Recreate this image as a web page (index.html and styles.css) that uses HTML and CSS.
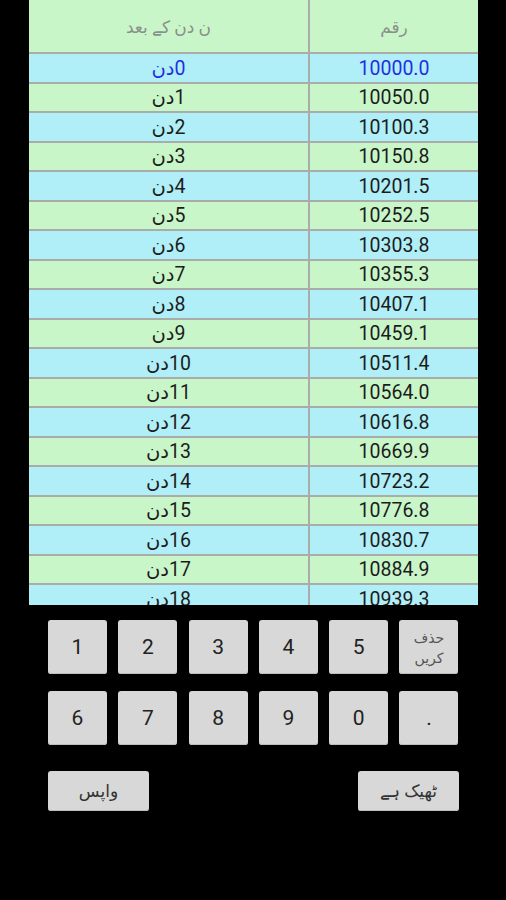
FILE: index.html
```html
<!DOCTYPE html>
<html lang="ur">
<head>
    <meta charset="UTF-8">
    <meta name="viewport" content="width=device-width, initial-scale=1.0">
    <title>منافع</title>
    <link rel="stylesheet" href="styles.css">
</head>
<body>
    <div class="table-box">
        <div class="grid">
            <div class="cell head" dir="rtl">ن دن کے بعد</div>
            <div class="cell head" dir="rtl">رقم</div>

            <div class="cell blue first" dir="rtl">0دن</div>
            <div class="cell blue first">10000.0</div>
            <div class="cell" dir="rtl">1دن</div>
            <div class="cell">10050.0</div>
            <div class="cell blue" dir="rtl">2دن</div>
            <div class="cell blue">10100.3</div>
            <div class="cell" dir="rtl">3دن</div>
            <div class="cell">10150.8</div>
            <div class="cell blue" dir="rtl">4دن</div>
            <div class="cell blue">10201.5</div>
            <div class="cell" dir="rtl">5دن</div>
            <div class="cell">10252.5</div>
            <div class="cell blue" dir="rtl">6دن</div>
            <div class="cell blue">10303.8</div>
            <div class="cell" dir="rtl">7دن</div>
            <div class="cell">10355.3</div>
            <div class="cell blue" dir="rtl">8دن</div>
            <div class="cell blue">10407.1</div>
            <div class="cell" dir="rtl">9دن</div>
            <div class="cell">10459.1</div>
            <div class="cell blue" dir="rtl">10دن</div>
            <div class="cell blue">10511.4</div>
            <div class="cell" dir="rtl">11دن</div>
            <div class="cell">10564.0</div>
            <div class="cell blue" dir="rtl">12دن</div>
            <div class="cell blue">10616.8</div>
            <div class="cell" dir="rtl">13دن</div>
            <div class="cell">10669.9</div>
            <div class="cell blue" dir="rtl">14دن</div>
            <div class="cell blue">10723.2</div>
            <div class="cell" dir="rtl">15دن</div>
            <div class="cell">10776.8</div>
            <div class="cell blue" dir="rtl">16دن</div>
            <div class="cell blue">10830.7</div>
            <div class="cell" dir="rtl">17دن</div>
            <div class="cell">10884.9</div>
            <div class="cell blue" dir="rtl">18دن</div>
            <div class="cell blue">10939.3</div>
        </div>
    </div>

    <div class="keypad">
        <div class="keys">
            <button class="key">1</button>
            <button class="key">2</button>
            <button class="key">3</button>
            <button class="key">4</button>
            <button class="key">5</button>
            <button class="key key-del" dir="rtl">حذف<br>کریں</button>
            <button class="key">6</button>
            <button class="key">7</button>
            <button class="key">8</button>
            <button class="key">9</button>
            <button class="key">0</button>
            <button class="key">.</button>
        </div>
        <div class="actions">
            <button class="key wide" dir="rtl">واپس</button>
            <button class="key wide" dir="rtl">ٹھیک ہے</button>
        </div>
    </div>
</body>
</html>
```

FILE: styles.css
```css
body {
    margin: 0;
    background-color: #000;
    font-family: Roboto, "DejaVu Sans", sans-serif;
}
.table-box {
    margin-left: 29px;
    width: 449px;
    height: 605px;
    overflow: hidden;
}
.grid {
    display: grid;
    grid-template-columns: 279px 168px;
    grid-template-rows: 52px;
    grid-auto-rows: 27.5px;
    gap: 2px;
    background-color: #a9aca9;
}
.cell {
    display: flex;
    align-items: center;
    justify-content: center;
    padding-top: 1px;
    background-color: #c9f6c9;
    color: #1c1c1c;
    font-size: 19.5px;
}
.cell.head {
    color: #8a8f8a;
    font-size: 17px;
}
.cell.blue {
    background-color: #b0eef8;
}
.cell.first {
    color: #1f2fe0;
}
.keypad {
    padding: 15px 0 0 48px;
}
.keys {
    display: grid;
    grid-template-columns: repeat(6, 59px);
    grid-auto-rows: 54px;
    column-gap: 11.3px;
    row-gap: 16.7px;
}
.key {
    padding: 0;
    border: none;
    border-radius: 3px;
    background-color: #d8d8d8;
    color: #222;
    font-family: Roboto, "DejaVu Sans", sans-serif;
    font-size: 21px;
    box-shadow: inset 0 -1px 0 #bdbdbd;
}
.key-del {
    font-size: 14px;
    line-height: 20px;
    color: #555;
    padding-top: 2px;
}
.actions {
    display: flex;
    justify-content: space-between;
    width: 411px;
    margin-top: 26px;
}
.key.wide {
    width: 101px;
    height: 40px;
    font-size: 17px;
    color: #333;
}
```
